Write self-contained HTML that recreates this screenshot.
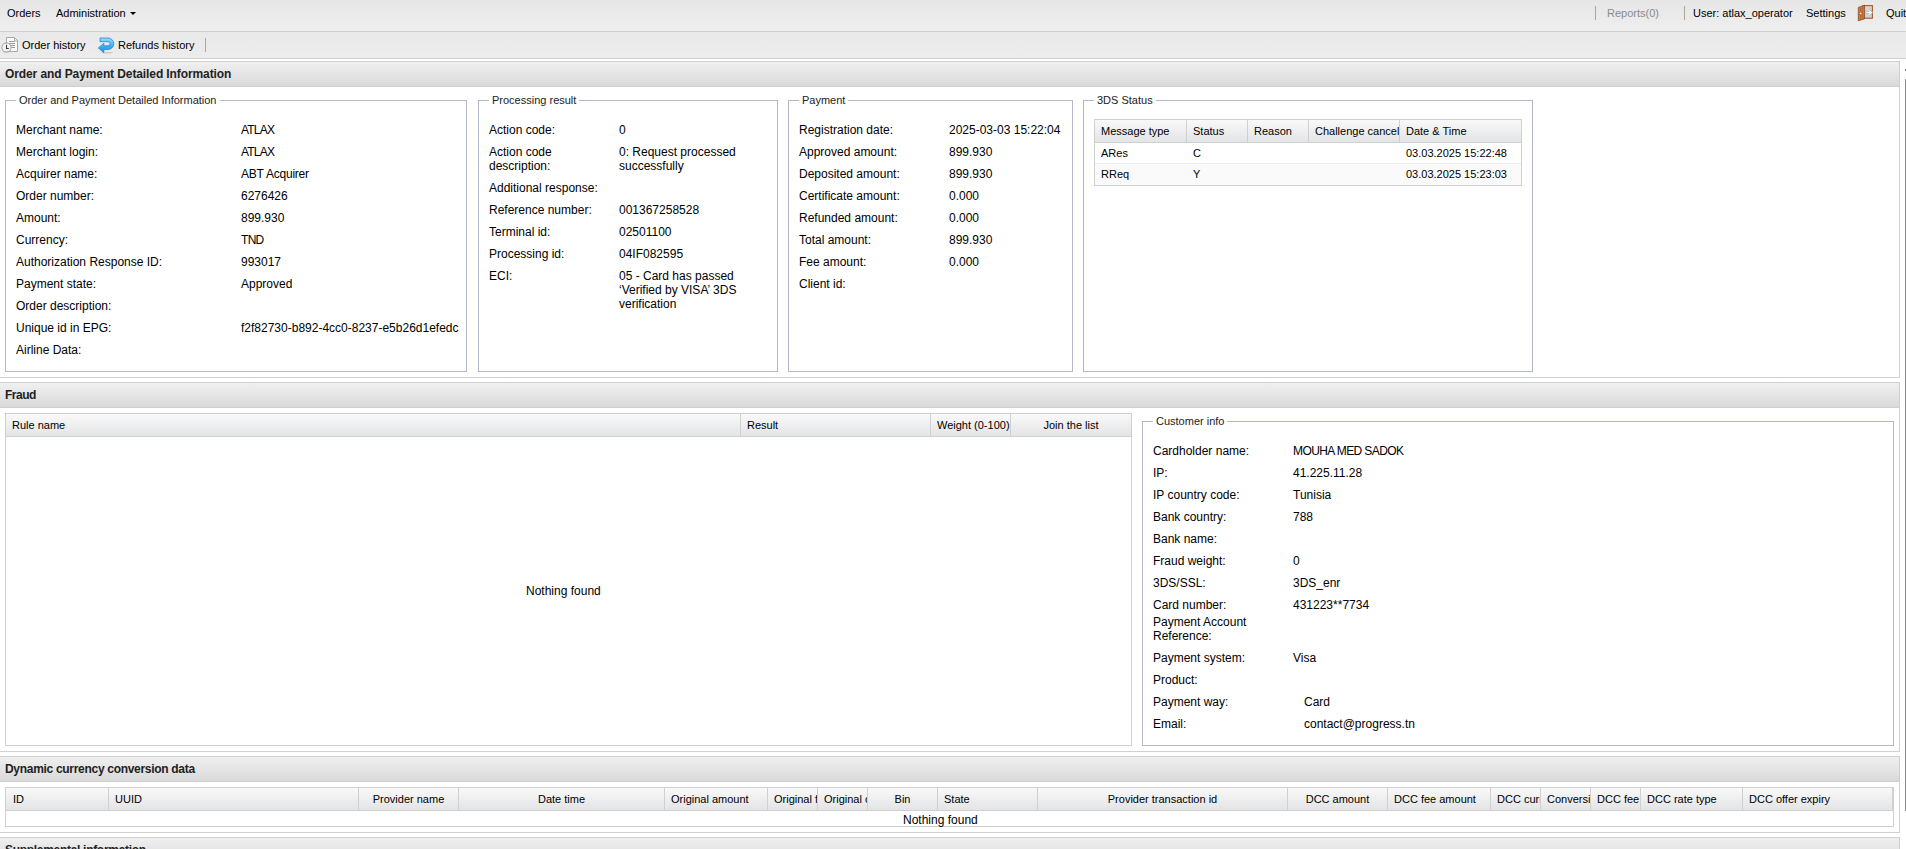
<!DOCTYPE html><html><head><meta charset="utf-8"><style>
html,body{margin:0;padding:0;width:1906px;height:849px;overflow:hidden;background:#fff;position:relative}
.t{position:absolute;white-space:nowrap;font-family:"Liberation Sans",sans-serif;color:#000}
</style></head><body>
<div style="position:absolute;left:0px;top:0px;width:1906px;height:31px;background:linear-gradient(#e6e6e6,#efefef)"></div>
<div style="position:absolute;left:0px;top:31px;width:1906px;height:1px;background:#d0d0d0"></div>
<div class="t" style="left:7px;top:7px;font-size:11px;line-height:13px;color:#000;">Orders</div>
<div class="t" style="left:56px;top:7px;font-size:11px;line-height:13px;color:#000;">Administration</div>
<div style="position:absolute;left:130px;top:12px;width:0;height:0;border-left:3px solid transparent;border-right:3px solid transparent;border-top:3px solid #000"></div>
<div style="position:absolute;left:1595px;top:6px;width:1px;height:14px;background:#aca899"></div>
<div class="t" style="left:1607px;top:7px;font-size:11px;line-height:13px;color:#8a8a8a;">Reports(0)</div>
<div style="position:absolute;left:1684px;top:6px;width:1px;height:14px;background:#aca899"></div>
<div class="t" style="left:1693px;top:7px;font-size:11px;line-height:13px;color:#000;">User: atlax_operator</div>
<div class="t" style="left:1806px;top:7px;font-size:11px;line-height:13px;color:#000;">Settings</div>
<svg style="position:absolute;left:1855px;top:2px" width="22" height="22" viewBox="0 0 22 22">
<rect x="7.8" y="3.6" width="9.6" height="12.6" fill="#d4d4d4" stroke="#a9582a" stroke-width="1.1"/>
<path d="M11.5 10.5H15.8M14 8.3L16.5 10.5L14 12.7" stroke="#999" stroke-width="2.6" fill="none"/>
<path d="M11.5 10.5H15.8M14 8.3L16.5 10.5L14 12.7" stroke="#fff" stroke-width="1.3" fill="none"/>
<path d="M3.3 5.4L9.6 3.2V16.8L3.3 18.8Z" fill="#c77b40" stroke="#8d4a22" stroke-width="0.8" stroke-linejoin="round"/>
<path d="M5.6 5.5V17.5M7.6 4.6V17" stroke="#a8602e" stroke-width="0.7"/>
<rect x="4.9" y="10.8" width="1.3" height="1.3" fill="#fff"/>
</svg>
<div class="t" style="left:1886px;top:7px;font-size:11px;line-height:13px;color:#000;">Quit</div>
<div style="position:absolute;left:0px;top:32px;width:1906px;height:26px;background:linear-gradient(#e9e9e9,#ececec)"></div>
<div style="position:absolute;left:0px;top:58px;width:1906px;height:1px;background:#d0d0d0"></div>
<svg style="position:absolute;left:0px;top:34px" width="20" height="22" viewBox="0 0 20 22">
<path d="M6.5 3.5h8l3 3v11h-11z" fill="#fbfbfb" stroke="#a9a9a9"/>
<path d="M14.5 3.5v3.5h3" fill="none" stroke="#a9a9a9"/>
<path d="M9 7.5h5.5M9 9.5h6M10 11.5h5M11 13.5h4" stroke="#9a9a9a"/>
<circle cx="6.5" cy="13.5" r="4.6" fill="#f4f4f0" stroke="#a9a9a9" stroke-width="1.1"/>
<path d="M6.5 10.8v3.7h2.3" stroke="#3a3a3a" fill="none" stroke-width="1.1"/>
</svg>
<div class="t" style="left:22px;top:39px;font-size:11px;line-height:13px;color:#000;">Order history</div>
<svg style="position:absolute;left:96px;top:34px" width="22" height="22" viewBox="0 0 22 22">
<defs><linearGradient id="ag" x1="0" y1="0" x2="0" y2="1"><stop offset="0" stop-color="#9bdcff"/><stop offset="0.6" stop-color="#35aef5"/><stop offset="1" stop-color="#1a8fe6"/></linearGradient></defs>
<ellipse cx="11" cy="18.6" rx="6" ry="0.9" fill="#bbb" opacity=".7"/>
<path d="M4 4H12A5.75 5.75 0 0 1 12 15.5H7.8V18.6L2.3 14L7.8 9.3V11.8H12A2.05 2.05 0 0 0 12 7.7H4Z" fill="url(#ag)" stroke="#2d83d3" stroke-width="0.8" stroke-linejoin="round"/>
</svg>
<div class="t" style="left:118px;top:39px;font-size:11px;line-height:13px;color:#000;">Refunds history</div>
<div style="position:absolute;left:205px;top:38px;width:1px;height:14px;background:#aca899"></div>
<div style="position:absolute;left:0px;top:61px;width:1900px;height:26px;background:linear-gradient(#f0f0f0,#d9d9d9);border-top:1px solid #d0d0d0;border-bottom:1px solid #d0d0d0;box-sizing:border-box"></div>
<div style="position:absolute;left:1899px;top:61px;width:1px;height:26px;background:#d0d0d0"></div>
<div class="t" style="left:5px;top:67px;font-size:12px;line-height:14px;font-weight:bold;color:#222;letter-spacing:-0.1px;">Order and Payment Detailed Information</div>
<div style="position:absolute;left:1899px;top:87px;width:1px;height:291px;background:#d0d0d0"></div>
<div style="position:absolute;left:0px;top:377px;width:1900px;height:1px;background:#d0d0d0"></div>
<div style="position:absolute;left:5px;top:100px;width:460px;height:270px;border:1px solid #b5b8c8"></div>
<div class="t" style="left:16px;top:94px;font-size:11px;line-height:13px;background:#fff;padding:0 3px;color:#222">Order and Payment Detailed Information</div>
<div style="position:absolute;left:478px;top:100px;width:298px;height:270px;border:1px solid #b5b8c8"></div>
<div class="t" style="left:489px;top:94px;font-size:11px;line-height:13px;background:#fff;padding:0 3px;color:#222">Processing result</div>
<div style="position:absolute;left:788px;top:100px;width:283px;height:270px;border:1px solid #b5b8c8"></div>
<div class="t" style="left:799px;top:94px;font-size:11px;line-height:13px;background:#fff;padding:0 3px;color:#222">Payment</div>
<div style="position:absolute;left:1083px;top:100px;width:448px;height:270px;border:1px solid #b5b8c8"></div>
<div class="t" style="left:1094px;top:94px;font-size:11px;line-height:13px;background:#fff;padding:0 3px;color:#222">3DS Status</div>
<div class="t" style="left:16px;top:123px;font-size:12px;line-height:14px;color:#000;">Merchant name:</div>
<div class="t" style="left:241px;top:123px;font-size:12px;line-height:14px;color:#000;letter-spacing:-0.8px;">ATLAX</div>
<div class="t" style="left:16px;top:145px;font-size:12px;line-height:14px;color:#000;">Merchant login:</div>
<div class="t" style="left:241px;top:145px;font-size:12px;line-height:14px;color:#000;letter-spacing:-0.8px;">ATLAX</div>
<div class="t" style="left:16px;top:167px;font-size:12px;line-height:14px;color:#000;">Acquirer name:</div>
<div class="t" style="left:241px;top:167px;font-size:12px;line-height:14px;color:#000;letter-spacing:-0.22px;">ABT Acquirer</div>
<div class="t" style="left:16px;top:189px;font-size:12px;line-height:14px;color:#000;">Order number:</div>
<div class="t" style="left:241px;top:189px;font-size:12px;line-height:14px;color:#000;">6276426</div>
<div class="t" style="left:16px;top:211px;font-size:12px;line-height:14px;color:#000;">Amount:</div>
<div class="t" style="left:241px;top:211px;font-size:12px;line-height:14px;color:#000;">899.930</div>
<div class="t" style="left:16px;top:233px;font-size:12px;line-height:14px;color:#000;">Currency:</div>
<div class="t" style="left:241px;top:233px;font-size:12px;line-height:14px;color:#000;letter-spacing:-0.7px;">TND</div>
<div class="t" style="left:16px;top:255px;font-size:12px;line-height:14px;color:#000;">Authorization Response ID:</div>
<div class="t" style="left:241px;top:255px;font-size:12px;line-height:14px;color:#000;">993017</div>
<div class="t" style="left:16px;top:277px;font-size:12px;line-height:14px;color:#000;">Payment state:</div>
<div class="t" style="left:241px;top:277px;font-size:12px;line-height:14px;color:#000;">Approved</div>
<div class="t" style="left:16px;top:299px;font-size:12px;line-height:14px;color:#000;">Order description:</div>
<div class="t" style="left:16px;top:321px;font-size:12px;line-height:14px;color:#000;">Unique id in EPG:</div>
<div class="t" style="left:241px;top:321px;font-size:12px;line-height:14px;color:#000;">f2f82730-b892-4cc0-8237-e5b26d1efedc</div>
<div class="t" style="left:16px;top:343px;font-size:12px;line-height:14px;color:#000;">Airline Data:</div>
<div class="t" style="left:489px;top:123px;font-size:12px;line-height:14px;color:#000;">Action code:</div>
<div class="t" style="left:619px;top:123px;font-size:12px;line-height:14px;color:#000;">0</div>
<div class="t" style="left:489px;top:145px;font-size:12px;line-height:14px;color:#000;">Action code</div>
<div class="t" style="left:489px;top:159px;font-size:12px;line-height:14px;color:#000;">description:</div>
<div class="t" style="left:619px;top:145px;font-size:12px;line-height:14px;color:#000;">0: Request processed</div>
<div class="t" style="left:619px;top:159px;font-size:12px;line-height:14px;color:#000;">successfully</div>
<div class="t" style="left:489px;top:181px;font-size:12px;line-height:14px;color:#000;">Additional response:</div>
<div class="t" style="left:489px;top:203px;font-size:12px;line-height:14px;color:#000;">Reference number:</div>
<div class="t" style="left:619px;top:203px;font-size:12px;line-height:14px;color:#000;">001367258528</div>
<div class="t" style="left:489px;top:225px;font-size:12px;line-height:14px;color:#000;">Terminal id:</div>
<div class="t" style="left:619px;top:225px;font-size:12px;line-height:14px;color:#000;">02501100</div>
<div class="t" style="left:489px;top:247px;font-size:12px;line-height:14px;color:#000;">Processing id:</div>
<div class="t" style="left:619px;top:247px;font-size:12px;line-height:14px;color:#000;">04IF082595</div>
<div class="t" style="left:489px;top:269px;font-size:12px;line-height:14px;color:#000;">ECI:</div>
<div class="t" style="left:619px;top:269px;font-size:12px;line-height:14px;color:#000;">05 - Card has passed</div>
<div class="t" style="left:619px;top:283px;font-size:12px;line-height:14px;color:#000;">‘Verified by VISA’ 3DS</div>
<div class="t" style="left:619px;top:297px;font-size:12px;line-height:14px;color:#000;">verification</div>
<div class="t" style="left:799px;top:123px;font-size:12px;line-height:14px;color:#000;">Registration date:</div>
<div class="t" style="left:949px;top:123px;font-size:12px;line-height:14px;color:#000;">2025-03-03 15:22:04</div>
<div class="t" style="left:799px;top:145px;font-size:12px;line-height:14px;color:#000;">Approved amount:</div>
<div class="t" style="left:949px;top:145px;font-size:12px;line-height:14px;color:#000;">899.930</div>
<div class="t" style="left:799px;top:167px;font-size:12px;line-height:14px;color:#000;">Deposited amount:</div>
<div class="t" style="left:949px;top:167px;font-size:12px;line-height:14px;color:#000;">899.930</div>
<div class="t" style="left:799px;top:189px;font-size:12px;line-height:14px;color:#000;">Certificate amount:</div>
<div class="t" style="left:949px;top:189px;font-size:12px;line-height:14px;color:#000;">0.000</div>
<div class="t" style="left:799px;top:211px;font-size:12px;line-height:14px;color:#000;">Refunded amount:</div>
<div class="t" style="left:949px;top:211px;font-size:12px;line-height:14px;color:#000;">0.000</div>
<div class="t" style="left:799px;top:233px;font-size:12px;line-height:14px;color:#000;">Total amount:</div>
<div class="t" style="left:949px;top:233px;font-size:12px;line-height:14px;color:#000;">899.930</div>
<div class="t" style="left:799px;top:255px;font-size:12px;line-height:14px;color:#000;">Fee amount:</div>
<div class="t" style="left:949px;top:255px;font-size:12px;line-height:14px;color:#000;">0.000</div>
<div class="t" style="left:799px;top:277px;font-size:12px;line-height:14px;color:#000;">Client id:</div>
<div style="position:absolute;left:1094px;top:119px;width:428px;height:67px;border:1px solid #d0d0d0;box-sizing:border-box;background:#fff"></div>
<div style="position:absolute;left:1094px;top:119px;width:428px;height:24px;background:linear-gradient(#f9f9f9,#e3e4e6);border:1px solid #d0d0d0;box-sizing:border-box"></div>
<div style="position:absolute;left:1186px;top:120px;width:1px;height:22px;background:#d0d0d0"></div>
<div style="position:absolute;left:1247px;top:120px;width:1px;height:22px;background:#d0d0d0"></div>
<div style="position:absolute;left:1308px;top:120px;width:1px;height:22px;background:#d0d0d0"></div>
<div style="position:absolute;left:1399px;top:120px;width:1px;height:22px;background:#d0d0d0"></div>
<div style="position:absolute;left:1095px;top:143px;width:426px;height:20px;background:#fff"></div>
<div style="position:absolute;left:1095px;top:163px;width:426px;height:1px;background:#ededed"></div>
<div style="position:absolute;left:1095px;top:164px;width:426px;height:21px;background:#fafafa"></div>
<div class="t" style="left:1101px;top:125px;width:84px;font-size:11px;line-height:13px;text-align:left;overflow:hidden">Message type</div>
<div class="t" style="left:1193px;top:125px;width:54px;font-size:11px;line-height:13px;text-align:left;overflow:hidden">Status</div>
<div class="t" style="left:1254px;top:125px;width:54px;font-size:11px;line-height:13px;text-align:left;overflow:hidden">Reason</div>
<div class="t" style="left:1315px;top:125px;width:84px;font-size:11px;line-height:13px;text-align:left;overflow:hidden">Challenge cancel</div>
<div class="t" style="left:1406px;top:125px;width:114px;font-size:11px;line-height:13px;text-align:left;overflow:hidden">Date &amp; Time</div>
<div class="t" style="left:1101px;top:147px;width:84px;font-size:11px;line-height:13px;text-align:left;overflow:hidden">ARes</div>
<div class="t" style="left:1193px;top:147px;width:54px;font-size:11px;line-height:13px;text-align:left;overflow:hidden">C</div>
<div class="t" style="left:1406px;top:147px;width:114px;font-size:11px;line-height:13px;text-align:left;overflow:hidden">03.03.2025 15:22:48</div>
<div class="t" style="left:1101px;top:168px;width:84px;font-size:11px;line-height:13px;text-align:left;overflow:hidden">RReq</div>
<div class="t" style="left:1193px;top:168px;width:54px;font-size:11px;line-height:13px;text-align:left;overflow:hidden">Y</div>
<div class="t" style="left:1406px;top:168px;width:114px;font-size:11px;line-height:13px;text-align:left;overflow:hidden">03.03.2025 15:23:03</div>
<div style="position:absolute;left:0px;top:382px;width:1900px;height:26px;background:linear-gradient(#f0f0f0,#d9d9d9);border-top:1px solid #d0d0d0;border-bottom:1px solid #d0d0d0;box-sizing:border-box"></div>
<div style="position:absolute;left:1899px;top:382px;width:1px;height:26px;background:#d0d0d0"></div>
<div class="t" style="left:5px;top:388px;font-size:12px;line-height:14px;font-weight:bold;color:#222;letter-spacing:-0.5px;">Fraud</div>
<div style="position:absolute;left:1899px;top:408px;width:1px;height:344px;background:#d0d0d0"></div>
<div style="position:absolute;left:0px;top:751px;width:1900px;height:1px;background:#d0d0d0"></div>
<div style="position:absolute;left:5px;top:413px;width:1127px;height:333px;border:1px solid #d0d0d0;box-sizing:border-box;background:#fff"></div>
<div style="position:absolute;left:5px;top:413px;width:1127px;height:24px;background:linear-gradient(#f9f9f9,#e3e4e6);border:1px solid #d0d0d0;box-sizing:border-box"></div>
<div style="position:absolute;left:740px;top:414px;width:1px;height:22px;background:#d0d0d0"></div>
<div style="position:absolute;left:930px;top:414px;width:1px;height:22px;background:#d0d0d0"></div>
<div style="position:absolute;left:1010px;top:414px;width:1px;height:22px;background:#d0d0d0"></div>
<div class="t" style="left:12px;top:419px;width:720px;font-size:11px;line-height:13px;text-align:left;overflow:hidden">Rule name</div>
<div class="t" style="left:747px;top:419px;width:180px;font-size:11px;line-height:13px;text-align:left;overflow:hidden">Result</div>
<div class="t" style="left:937px;top:419px;width:73px;font-size:11px;line-height:13px;text-align:left;overflow:hidden">Weight (0-100)</div>
<div class="t" style="left:1011px;top:419px;width:120px;font-size:11px;line-height:13px;text-align:center;overflow:hidden">Join the list</div>
<div class="t" style="left:526px;top:584px;font-size:12px;line-height:14px;color:#000;">Nothing found</div>
<div style="position:absolute;left:1142px;top:421px;width:750px;height:323px;border:1px solid #b5b8c8"></div>
<div class="t" style="left:1153px;top:415px;font-size:11px;line-height:13px;background:#fff;padding:0 3px;color:#222">Customer info</div>
<div class="t" style="left:1153px;top:444px;font-size:12px;line-height:14px;color:#000;">Cardholder name:</div>
<div class="t" style="left:1293px;top:444px;font-size:12px;line-height:14px;color:#000;letter-spacing:-0.6px;">MOUHA MED SADOK</div>
<div class="t" style="left:1153px;top:466px;font-size:12px;line-height:14px;color:#000;">IP:</div>
<div class="t" style="left:1293px;top:466px;font-size:12px;line-height:14px;color:#000;">41.225.11.28</div>
<div class="t" style="left:1153px;top:488px;font-size:12px;line-height:14px;color:#000;">IP country code:</div>
<div class="t" style="left:1293px;top:488px;font-size:12px;line-height:14px;color:#000;">Tunisia</div>
<div class="t" style="left:1153px;top:510px;font-size:12px;line-height:14px;color:#000;">Bank country:</div>
<div class="t" style="left:1293px;top:510px;font-size:12px;line-height:14px;color:#000;">788</div>
<div class="t" style="left:1153px;top:532px;font-size:12px;line-height:14px;color:#000;">Bank name:</div>
<div class="t" style="left:1153px;top:554px;font-size:12px;line-height:14px;color:#000;">Fraud weight:</div>
<div class="t" style="left:1293px;top:554px;font-size:12px;line-height:14px;color:#000;">0</div>
<div class="t" style="left:1153px;top:576px;font-size:12px;line-height:14px;color:#000;">3DS/SSL:</div>
<div class="t" style="left:1293px;top:576px;font-size:12px;line-height:14px;color:#000;">3DS_enr</div>
<div class="t" style="left:1153px;top:598px;font-size:12px;line-height:14px;color:#000;">Card number:</div>
<div class="t" style="left:1293px;top:598px;font-size:12px;line-height:14px;color:#000;">431223**7734</div>
<div class="t" style="left:1153px;top:615px;font-size:12px;line-height:14px;color:#000;">Payment Account</div>
<div class="t" style="left:1153px;top:629px;font-size:12px;line-height:14px;color:#000;">Reference:</div>
<div class="t" style="left:1153px;top:651px;font-size:12px;line-height:14px;color:#000;">Payment system:</div>
<div class="t" style="left:1293px;top:651px;font-size:12px;line-height:14px;color:#000;">Visa</div>
<div class="t" style="left:1153px;top:673px;font-size:12px;line-height:14px;color:#000;">Product:</div>
<div class="t" style="left:1153px;top:695px;font-size:12px;line-height:14px;color:#000;">Payment way:</div>
<div class="t" style="left:1304px;top:695px;font-size:12px;line-height:14px;color:#000;">Card</div>
<div class="t" style="left:1153px;top:717px;font-size:12px;line-height:14px;color:#000;">Email:</div>
<div class="t" style="left:1304px;top:717px;font-size:12px;line-height:14px;color:#000;">contact@progress.tn</div>
<div style="position:absolute;left:0px;top:756px;width:1900px;height:26px;background:linear-gradient(#f0f0f0,#d9d9d9);border-top:1px solid #d0d0d0;border-bottom:1px solid #d0d0d0;box-sizing:border-box"></div>
<div style="position:absolute;left:1899px;top:756px;width:1px;height:26px;background:#d0d0d0"></div>
<div class="t" style="left:5px;top:762px;font-size:12px;line-height:14px;font-weight:bold;color:#222;letter-spacing:-0.3px;">Dynamic currency conversion data</div>
<div style="position:absolute;left:1899px;top:782px;width:1px;height:51px;background:#d0d0d0"></div>
<div style="position:absolute;left:0px;top:832px;width:1900px;height:1px;background:#d0d0d0"></div>
<div style="position:absolute;left:5px;top:787px;width:1889px;height:40px;border:1px solid #d0d0d0;box-sizing:border-box;background:#fff"></div>
<div style="position:absolute;left:5px;top:787px;width:1888px;height:24px;background:linear-gradient(#f9f9f9,#e3e4e6);border:1px solid #d0d0d0;box-sizing:border-box"></div>
<div style="position:absolute;left:108px;top:788px;width:1px;height:22px;background:#d0d0d0"></div>
<div style="position:absolute;left:358px;top:788px;width:1px;height:22px;background:#d0d0d0"></div>
<div style="position:absolute;left:458px;top:788px;width:1px;height:22px;background:#d0d0d0"></div>
<div style="position:absolute;left:664px;top:788px;width:1px;height:22px;background:#d0d0d0"></div>
<div style="position:absolute;left:767px;top:788px;width:1px;height:22px;background:#d0d0d0"></div>
<div style="position:absolute;left:817px;top:788px;width:1px;height:22px;background:#d0d0d0"></div>
<div style="position:absolute;left:867px;top:788px;width:1px;height:22px;background:#d0d0d0"></div>
<div style="position:absolute;left:937px;top:788px;width:1px;height:22px;background:#d0d0d0"></div>
<div style="position:absolute;left:1037px;top:788px;width:1px;height:22px;background:#d0d0d0"></div>
<div style="position:absolute;left:1287px;top:788px;width:1px;height:22px;background:#d0d0d0"></div>
<div style="position:absolute;left:1387px;top:788px;width:1px;height:22px;background:#d0d0d0"></div>
<div style="position:absolute;left:1490px;top:788px;width:1px;height:22px;background:#d0d0d0"></div>
<div style="position:absolute;left:1540px;top:788px;width:1px;height:22px;background:#d0d0d0"></div>
<div style="position:absolute;left:1590px;top:788px;width:1px;height:22px;background:#d0d0d0"></div>
<div style="position:absolute;left:1640px;top:788px;width:1px;height:22px;background:#d0d0d0"></div>
<div style="position:absolute;left:1742px;top:788px;width:1px;height:22px;background:#d0d0d0"></div>
<div class="t" style="left:13px;top:793px;width:95px;font-size:11px;line-height:13px;text-align:left;overflow:hidden">ID</div>
<div class="t" style="left:115px;top:793px;width:243px;font-size:11px;line-height:13px;text-align:left;overflow:hidden">UUID</div>
<div class="t" style="left:359px;top:793px;width:99px;font-size:11px;line-height:13px;text-align:center;overflow:hidden">Provider name</div>
<div class="t" style="left:459px;top:793px;width:205px;font-size:11px;line-height:13px;text-align:center;overflow:hidden">Date time</div>
<div class="t" style="left:671px;top:793px;width:96px;font-size:11px;line-height:13px;text-align:left;overflow:hidden">Original amount</div>
<div class="t" style="left:774px;top:793px;width:43px;font-size:11px;line-height:13px;text-align:left;overflow:hidden">Original fee</div>
<div class="t" style="left:824px;top:793px;width:43px;font-size:11px;line-height:13px;text-align:left;overflow:hidden">Original currency</div>
<div class="t" style="left:868px;top:793px;width:69px;font-size:11px;line-height:13px;text-align:center;overflow:hidden">Bin</div>
<div class="t" style="left:944px;top:793px;width:93px;font-size:11px;line-height:13px;text-align:left;overflow:hidden">State</div>
<div class="t" style="left:1038px;top:793px;width:249px;font-size:11px;line-height:13px;text-align:center;overflow:hidden">Provider transaction id</div>
<div class="t" style="left:1288px;top:793px;width:99px;font-size:11px;line-height:13px;text-align:center;overflow:hidden">DCC amount</div>
<div class="t" style="left:1394px;top:793px;width:96px;font-size:11px;line-height:13px;text-align:left;overflow:hidden">DCC fee amount</div>
<div class="t" style="left:1497px;top:793px;width:43px;font-size:11px;line-height:13px;text-align:left;overflow:hidden">DCC currency</div>
<div class="t" style="left:1547px;top:793px;width:43px;font-size:11px;line-height:13px;text-align:left;overflow:hidden">Conversion rate</div>
<div class="t" style="left:1597px;top:793px;width:43px;font-size:11px;line-height:13px;text-align:left;overflow:hidden">DCC fee</div>
<div class="t" style="left:1647px;top:793px;width:95px;font-size:11px;line-height:13px;text-align:left;overflow:hidden">DCC rate type</div>
<div class="t" style="left:1749px;top:793px;width:143px;font-size:11px;line-height:13px;text-align:left;overflow:hidden">DCC offer expiry</div>
<div class="t" style="left:903px;top:813px;font-size:12px;line-height:14px;color:#000;">Nothing found</div>
<div style="position:absolute;left:0px;top:837px;width:1900px;height:26px;background:linear-gradient(#f0f0f0,#d9d9d9);border-top:1px solid #d0d0d0;border-bottom:1px solid #d0d0d0;box-sizing:border-box"></div>
<div style="position:absolute;left:1899px;top:837px;width:1px;height:26px;background:#d0d0d0"></div>
<div class="t" style="left:5px;top:843px;font-size:12px;line-height:14px;font-weight:bold;color:#222;letter-spacing:-0.3px;">Supplemental information</div>
<div style="position:absolute;left:1905px;top:79px;width:1px;height:732px;background:#8a8a8a"></div>
<div style="position:absolute;left:1905px;top:69px;width:1px;height:2px;background:#777"></div>
</body></html>
